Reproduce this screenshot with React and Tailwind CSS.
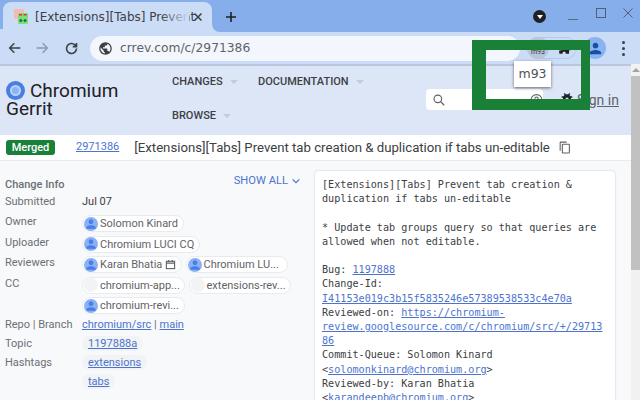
import React from "react";

const PERSON = "M12 12c2.21 0 4-1.79 4-4s-1.79-4-4-4-4 1.79-4 4 1.79 4 4 4zm0 2c-2.67 0-8 1.34-8 4v2h16v-2c0-2.66-5.33-4-8-4z";
const BUG = "M20 8h-2.81c-.45-.78-1.07-1.45-1.82-1.96L17 4.41 15.59 3l-2.17 2.17C12.96 5.06 12.49 5 12 5c-.49 0-.96.06-1.41.17L8.41 3 7 4.41l1.62 1.63C7.88 6.55 7.26 7.22 6.81 8H4v2h2.09c-.05.33-.09.66-.09 1v1H4v2h2v1c0 .34.04.67.09 1H4v2h2.81c1.04 1.79 2.97 3 5.19 3s4.15-1.21 5.19-3H20v-2h-2.09c.05-.33.09-.66.09-1v-1h2v-2h-2v-1c0-.34-.04-.67-.09-1H20V8zm-6 8h-4v-2h4v2zm0-4h-4v-2h4v2z";
const GLOBE = "M12 2C6.48 2 2 6.48 2 12s4.48 10 10 10 10-4.48 10-10S17.52 2 12 2zm-1 17.93c-3.95-.49-7-3.85-7-7.93 0-.62.08-1.21.21-1.79L9 15v1c0 1.1.9 2 2 2v1.93zm6.9-2.54c-.26-.81-1-1.39-1.9-1.39h-1v-3c0-.55-.45-1-1-1H8v-2h2c.55 0 1-.45 1-1V7h2c1.1 0 2-.9 2-2v-.41c2.93 1.19 5 4.06 5 7.41 0 2.08-.8 3.97-2.1 5.39z";

const Ico = ({ d, size = 16, className = "" }) => (
  <svg width={size} height={size} viewBox="0 0 24 24" fill="currentColor" className={`shrink-0 ${className}`}><path d={d} /></svg>
);

const Stroke = ({ children, size = 18, w = 2, className = "" }) => (
  <svg width={size} height={size} viewBox="0 0 24 24" fill="none" stroke="currentColor" strokeWidth={w} className={`shrink-0 ${className}`}>{children}</svg>
);

const Caret = () => <span className="ml-[7px] inline-block w-0 h-0 border-x-[4px] border-x-transparent border-t-[4px] border-t-[#c4cbd8] mb-px" />;

const Chip = ({ name, w, person = true, cal = false }) => (
  <div className={`${w} h-[17px] rounded-full bg-white border border-[#e8eaed] flex items-center pl-px shrink-0`}>
    {person ? (
      <span className="w-[14px] h-[14px] rounded-full bg-[#8ab0f5] overflow-hidden flex items-center justify-center shrink-0">
        <Ico d={PERSON} size={14} className="text-[#4a7ee6]" />
      </span>
    ) : (
      <span className="w-[14px] h-[14px] rounded-full bg-[#f1f3f4] shrink-0" />
    )}
    <span className="ml-[2px] text-[11px] leading-none text-[#5f6368] whitespace-nowrap">{name}</span>
    {cal && (
      <svg width="11" height="11" viewBox="0 0 24 24" fill="none" stroke="#5f6368" strokeWidth="2.4" className="ml-[3px]"><rect x="3" y="5" width="18" height="16" /><path d="M3 9h18M8 2v4M16 2v4" /></svg>
    )}
  </div>
);

const Row = ({ label, h = "h-[20.6px]", children }) => (
  <div className={`flex ${h}`}>
    <div className="w-[77px] text-[11px] leading-[16px] text-[#6b7075] whitespace-nowrap shrink-0">{label}</div>
    <div className="flex gap-[3.5px] mt-[1px]">{children}</div>
  </div>
);

const A = ({ children }) => <span className="text-[#4c74cf] underline">{children}</span>;

export default function App() {
  return (
    <div className="relative w-[640px] h-[400px] overflow-hidden bg-[#f8f9fa] font-['Roboto',sans-serif]">
      {/* title bar */}
      <div className="h-8 bg-[#85aeea] flex items-end pl-[3px]">
        <div className="relative w-[209px] h-[30px] bg-[#cbdcf7] rounded-t-lg flex items-center pl-[10px] font-['DejaVu_Sans',sans-serif]">
          <span className="absolute -left-[3px] bottom-0 w-[3px] h-[3px] bg-[#cbdcf7]" />
          <span className="absolute -right-2 bottom-0 w-2 h-2 bg-[#cbdcf7]"><span className="block w-2 h-2 bg-[#85aeea] rounded-bl-lg" /></span>
          <svg width="16" height="16" viewBox="0 0 16 16" className="shrink-0 -mt-px">
            <rect x="1" y="0" width="10" height="10" rx="1" fill="#f6b9b5" />
            <rect x="5" y="4" width="10" height="11" rx="1" fill="#7ede78" />
            <rect x="6" y="5" width="3" height="1.5" fill="#d33" />
            <rect x="10.5" y="5" width="3" height="1.5" fill="#d33" />
            <circle cx="7.8" cy="11.5" r="1.5" fill="#174" />
            <circle cx="12" cy="11.5" r="1.5" fill="#174" />
          </svg>
          <span className="ml-[6px] text-[12px] text-[#3c4043] whitespace-nowrap">[Extensions][Tabs] Prevent</span>
          <span className="absolute left-[158px] top-0 w-[28px] h-full bg-gradient-to-r from-transparent to-[#cbdcf7]" />
          <svg width="10" height="10" viewBox="0 0 10 10" stroke="#3c4043" strokeWidth="1.5" className="absolute left-[190px] top-[10px]"><path d="M1.5 1.5l7 7M8.5 1.5l-7 7" /></svg>
        </div>
        <svg width="12" height="12" viewBox="0 0 12 12" stroke="#202124" strokeWidth="1.6" className="ml-[13px] mb-[9px]"><path d="M6 1v10M1 6h10" /></svg>
        <div className="ml-auto flex items-center self-start mt-[6px]">
          <span className="w-[13px] h-[13px] mt-[4px] rounded-full bg-[#202124] flex items-center justify-center">
            <span className="w-0 h-0 border-x-[3px] border-x-transparent border-t-[4px] border-t-white" />
          </span>
          <span className="ml-[22px] mt-[10px] w-[10px] h-px bg-[#5a6a85]" />
          <span className="ml-[18px] -mt-[4px] w-[10px] h-[10px] border border-[#4f5f7a]" />
          <svg width="10" height="10" viewBox="0 0 10 10" stroke="#4f5f7a" strokeWidth="1" className="ml-[17px] mr-[7px] -mt-[4px]"><path d="M.5.5l9 9M9.5.5l-9 9" /></svg>
        </div>
      </div>

      {/* toolbar */}
      <div className="h-8 bg-[#cbdcf7] flex items-center border-b-0">
        <Stroke size={16} w={2.2} className="ml-[7px] text-[#3c4043]"><path d="M20 12H4M11 5l-7 7 7 7" /></Stroke>
        <Stroke size={16} w={2.2} className="ml-[11px] text-[#8d99ac]"><path d="M4 12h16M13 5l7 7-7 7" /></Stroke>
        <Stroke size={15} w={2.6} className="ml-[14px] text-[#3c4043]"><path d="M20 12a8 8 0 1 1-2.5-5.8L20 9M20 3v6h-6" /></Stroke>
        <div className="ml-[11px] w-[430px] h-[25px] rounded-full bg-[#f3f7fd] flex items-center pl-[8px] font-['DejaVu_Sans',sans-serif]">
          <Ico d={GLOBE} size={15} className="text-[#3c4043]" />
          <span className="ml-[7px] text-[12.3px] text-[#5f6368]">crrev.com/c/2971386</span>
        </div>
        <div className="ml-[7px] w-[50px] h-[22px] rounded-full border border-[#b9c9e2] flex items-center">
          <span className="w-[22px] h-[22px] -ml-px rounded-full bg-[#b7c6dc] flex items-center justify-center pt-[8px] text-[7px] leading-none text-[#333] overflow-hidden">m93</span>
          <svg width="14" height="14" viewBox="0 0 24 24" fill="#202124" className="ml-[9px]"><path d="M20.5 11H19V7a2 2 0 0 0-2-2h-4V3.5a2.5 2.5 0 0 0-5 0V5H4a2 2 0 0 0-2 2v3.8h1.5a2.7 2.7 0 0 1 0 5.4H2V20a2 2 0 0 0 2 2h3.8v-1.5a2.7 2.7 0 0 1 5.4 0V22H17a2 2 0 0 0 2-2v-4h1.5a2.5 2.5 0 0 0 0-5z" /></svg>
        </div>
        <span className="ml-[7px] w-[22px] h-[22px] rounded-full bg-[#8ab4f0] flex items-center justify-center">
          <Ico d={PERSON} size={17} className="text-[#174ea6]" />
        </span>
        <span className="ml-[16px] flex flex-col gap-[3px]">
          <span className="w-[3px] h-[3px] rounded-full bg-[#3c4043]" />
          <span className="w-[3px] h-[3px] rounded-full bg-[#3c4043]" />
          <span className="w-[3px] h-[3px] rounded-full bg-[#3c4043]" />
        </span>
      </div>

      <div className="flex h-[336px]">
        {/* page */}
        <div className="w-[631px] shrink-0">
          <div className="h-[2px] bg-[#b9c7de]" />
          {/* gerrit header */}
          <div className="h-[69px] bg-[#dde6f7] flex relative">
            <div className="w-[172px] pl-[6px] pt-[15px] text-[19px] leading-[18px] text-[#202124]">
              <div className="flex items-center">
                <span className="w-[19px] h-[19px] rounded-full bg-[#4a7fe0] flex items-center justify-center shrink-0">
                  <span className="w-[11px] h-[11px] rounded-full bg-[#8ab4f8] border-2 border-[#bcd3f8]" />
                </span>
                <span className="ml-[5px]">Chromium</span>
              </div>
              <div>Gerrit</div>
            </div>
            <div className="w-[254px] pt-[9px] flex flex-wrap content-start gap-y-[20px] text-[11px] font-medium leading-[14px] text-[#3c4043]">
              <span className="w-[86px] flex items-center">CHANGES<Caret /></span>
              <span className="flex items-center">DOCUMENTATION<Caret /></span>
              <span className="w-full flex items-center">BROWSE<Caret /></span>
            </div>
            <div className="w-[117px] h-[21px] mt-[23px] bg-white rounded-sm flex items-center pl-[6px]">
              <Stroke size={14} w={2} className="text-[#5f6368]"><circle cx="10" cy="10" r="6.5" /><path d="M15 15l6 6" /></Stroke>
              <svg width="14" height="14" viewBox="0 0 24 24" fill="none" stroke="#5f6368" strokeWidth="2" className="ml-[84px]"><circle cx="12" cy="12" r="10" /><path d="M9 9.5a3 3 0 1 1 4.5 2.6c-1 .6-1.5 1.2-1.5 2.4M12 17.5v.5" /></svg>
            </div>
            <Ico d={BUG} size={16} className="ml-[16px] mt-[25px] text-[#202124]" />
            <span className="ml-[2px] mt-[26px] text-[14px] leading-[16px] text-[#5f6368] underline">Sign in</span>
          </div>
          {/* change bar */}
          <div className="h-[26px] bg-white border-b border-[#e8eaed] flex items-center pl-[6px] text-[#3c4043]">
            <span className="w-[49px] h-[15px] rounded-[3px] bg-[#188038] text-white text-[11px] leading-[15px] text-center font-medium">Merged</span>
            <span className="ml-[21px] text-[11px] text-[#4c74cf] underline">2971386</span>
            <span className="ml-[15px] text-[13.2px] whitespace-nowrap">[Extensions][Tabs] Prevent tab creation &amp; duplication if tabs un-editable</span>
            <svg width="13" height="13" viewBox="0 0 24 24" fill="none" stroke="#5f6368" strokeWidth="2" className="ml-[8px]"><rect x="8" y="6" width="13" height="16" rx="1" /><path d="M4 18V3a1 1 0 0 1 1-1h11" /></svg>
          </div>
          {/* body */}
          <div className="flex h-[239px] overflow-hidden">
            <div className="w-[315px] shrink-0 pl-[5px] relative">
              <div className="h-[33px] pt-[16px] text-[11px] leading-[16px] font-medium text-[#6b7075] flex">
                Change Info
                <span className="ml-auto mr-[14px] -mt-[4px] h-[16px] flex items-center font-normal text-[11.2px] text-[#4c74cf]">
                  SHOW ALL
                  <Stroke size={10} w={3} className="ml-[3px]"><path d="M4 8l8 8 8-8" /></Stroke>
                </span>
              </div>
              <div className="flex h-[20px]">
                <div className="w-[77px] text-[11px] leading-[16px] text-[#6b7075]">Submitted</div>
                <div className="text-[11px] leading-[16px] text-[#3c4043]">Jul 07</div>
              </div>
              <Row label="Owner"><Chip name="Solomon Kinard" w="w-[102px]" /></Row>
              <Row label="Uploader"><Chip name="Chromium LUCI CQ" w="w-[118px]" /></Row>
              <Row label="Reviewers"><Chip name="Karan Bhatia" w="w-[100px]" cal /><Chip name="Chromium LU..." w="w-[102px]" /></Row>
              <Row label="CC"><Chip name="chromium-app..." w="w-[103px]" person={false} /><Chip name="extensions-rev..." w="w-[102px]" person={false} /></Row>
              <Row label=""><Chip name="chromium-revi..." w="w-[103px]" /></Row>
              <div className="flex h-[19px] text-[11px] leading-[16px] text-[#6b7075]">
                <div className="w-[77px]">Repo | Branch</div>
                <div><A>chromium/src</A> | <A>main</A></div>
              </div>
              <div className="flex h-[19px] text-[11px] leading-[16px] text-[#6b7075]">
                <div className="w-[77px]">Topic</div>
                <div className="px-[6px] h-[15px] bg-[#f1f3f4] rounded-full"><A>1197888a</A></div>
              </div>
              <div className="flex h-[19px] text-[11px] leading-[16px] text-[#6b7075]">
                <div className="w-[77px]">Hashtags</div>
                <div className="px-[6px] h-[15px] bg-[#f1f3f4] rounded-full"><A>extensions</A></div>
              </div>
              <div className="flex h-[19px] text-[11px] leading-[16px]">
                <div className="w-[77px]" />
                <div className="px-[6px] h-[15px] bg-[#f1f3f4] rounded-full"><A>tabs</A></div>
              </div>
            </div>
            <div className="w-[300px] h-[260px] mt-[10px] bg-white rounded shadow-[0_0_2px_rgba(60,64,67,0.3)] pl-[7px] pt-[7px] font-['DejaVu_Sans_Mono',monospace] text-[10.15px] leading-[14.2px] text-[#3c4043] whitespace-pre">
              <div>[Extensions][Tabs] Prevent tab creation &amp;</div>
              <div>duplication if tabs un-editable</div>
              <div>&nbsp;</div>
              <div>* Update tab groups query so that queries are</div>
              <div>allowed when not editable.</div>
              <div>&nbsp;</div>
              <div>Bug: <A>1197888</A></div>
              <div>Change-Id:</div>
              <div><A>I41153e019c3b15f5835246e57389538533c4e70a</A></div>
              <div>Reviewed-on: <A>https://chromium-</A></div>
              <div><A>review.googlesource.com/c/chromium/src/+/29713</A></div>
              <div><A>86</A></div>
              <div>Commit-Queue: Solomon Kinard</div>
              <div>&lt;<A>solomonkinard@chromium.org</A>&gt;</div>
              <div>Reviewed-by: Karan Bhatia</div>
              <div>&lt;<A>karandeepb@chromium.org</A>&gt;</div>
            </div>
          </div>
        </div>
        {/* scrollbar */}
        <div className="w-[9px] bg-[#f1f1f1] flex flex-col items-stretch">
          <div className="h-[12px] flex items-center justify-center">
            <span className="w-0 h-0 border-x-[4px] border-x-transparent border-b-[4px] border-b-[#a3a3a3]" />
          </div>
          <div className="h-[194px] bg-[#c1c1c1]" />
        </div>
      </div>

      {/* tooltip */}
      <div className="absolute left-[514px] top-[61px] w-[37px] h-[26px] bg-white shadow-[0_1px_3px_rgba(0,0,0,0.55)] flex items-center justify-center text-[12.5px] text-[#4f5358] font-['DejaVu_Sans',sans-serif]">m93</div>
      {/* green annotation frame */}
      <div className="absolute left-[472px] top-[40px] w-[118px] h-[70px] border-[#1a7f37] border-t-[10px] border-b-[11px] border-l-[14px] border-r-[9px]" />
    </div>
  );
}
